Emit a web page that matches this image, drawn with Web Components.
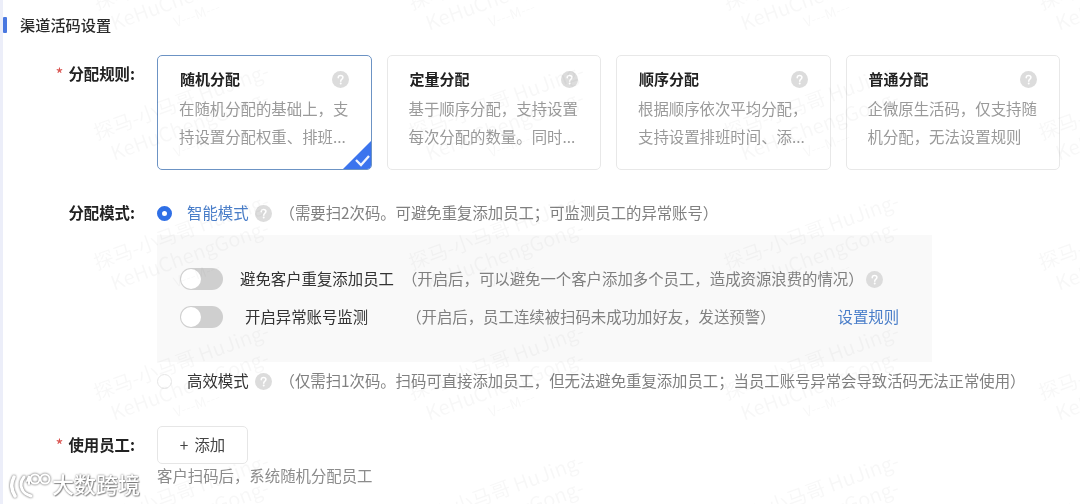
<!DOCTYPE html>
<html lang="zh"><head><meta charset="utf-8"><title>渠道活码设置</title>
<style>
html,body{margin:0;background:#fff;height:504px;overflow:hidden}
body{font-family:"Noto Sans CJK SC","Noto Sans",sans-serif;font-size:15.4px;color:#333}
</style></head><body>
<app-page>
  <section-title>渠道活码设置</section-title>
  <form-row required label="分配规则">
    <card-grid>
      <rule-card selected title="随机分配">在随机分配的基础上，支持设置分配权重、排班...</rule-card>
      <rule-card title="定量分配">基于顺序分配，支持设置每次分配的数量。同时...</rule-card>
      <rule-card title="顺序分配">根据顺序依次平均分配，支持设置排班时间、添...</rule-card>
      <rule-card title="普通分配">企微原生活码，仅支持随机分配，无法设置规则</rule-card>
    </card-grid>
  </form-row>
  <form-row class="mode" label="分配模式">
    <mode-option selected name="智能模式">（需要扫2次码。可避免重复添加员工；可监测员工的异常账号）</mode-option>
    <option-panel>
      <toggle-row name="避免客户重复添加员工" note="（开启后，可以避免一个客户添加多个员工，造成资源浪费的情况）" help></toggle-row>
      <toggle-row indent name="开启异常账号监测" note="（开启后，员工连续被扫码未成功加好友，发送预警）" link="设置规则"></toggle-row>
    </option-panel>
    <mode-option class="second" name="高效模式">（仅需扫1次码。扫码可直接添加员工，但无法避免重复添加员工；当员工账号异常会导致活码无法正常使用）</mode-option>
  </form-row>
  <form-row class="staff" required label="使用员工">
    <add-button>添加</add-button>
    <hint-text>客户扫码后，系统随机分配员工</hint-text>
  </form-row>
  <water-mark></water-mark>
  <brand-logo>大数跨境</brand-logo>
</app-page>
<script>
function def(name, css, html){
  customElements.define(name, class extends HTMLElement{
    constructor(){super();const r=this.attachShadow({mode:'open'});
      const get=k=>this.getAttribute(k)||'';
      r.innerHTML='<style>'+css+'</style>'+(typeof html==='function'?html(get,this):html);
    }
  });
}
const helpSvg='<svg viewBox="0 0 17 17" width="17" height="17" aria-hidden="true" style="flex:none"><circle cx="8.5" cy="8.5" r="8.5" fill="#dcdcdc"/><path d="M6.2 6.8c0-1.400 1-2.200 2.400-2.200s2.300.8 2.300 2c0 1-.6 1.400-1.200 1.800-.6.4-.9.7-.9 1.400v.4" fill="none" stroke="#fff" stroke-width="1.500" stroke-linecap="round"/><circle cx="8.700" cy="12.600" r="1" fill="#fff"/></svg>';
def('help-icon',':host{display:inline-flex;width:17px;height:17px;flex:none}',helpSvg);

def('app-page',`:host{display:block;position:relative;width:1080px;height:504px;overflow:hidden;box-sizing:border-box;border-left:3px solid #eceef9;filter:blur(.4px)}`,'<slot></slot>');

def('section-title',`:host{display:flex;align-items:center;height:16px;padding-top:17px;margin-bottom:22px;font-size:15.2px;font-weight:500;color:#2b2b2b}
 i{width:4px;height:16px;background:#4a78e0;margin-right:13px;border-radius:1px}
 span{padding-bottom:3px}`,'<i></i><span><slot></slot></span>');

def('form-row',`:host{display:grid;grid-template-columns:132px 1fr;column-gap:22px;padding-right:20px}
 .l{display:flex;justify-content:flex-end;align-items:center;height:38px;font-weight:700;color:#222;white-space:nowrap}
 .l span{padding-bottom:3px}
 :host(.mode) .l{height:24px}
 :host(.mode){margin-top:31px}
 :host(.staff){margin-top:33px}
 b{color:#d9534f;font-weight:400;margin-right:5px;font-size:17px;line-height:1;padding-bottom:1px}
 .c{min-width:0}`,(get,el)=>`<div class="l">${el.hasAttribute('required')?'<b>*</b>':''}<span>${get('label')}:</span></div><div class="c"><slot></slot></div>`);

def('card-grid',`:host{display:grid;grid-template-columns:repeat(4,1fr);column-gap:15px}`,'<slot></slot>');

def('rule-card',`:host{display:block;position:relative;height:115px;box-sizing:border-box;padding:11px 21px 0 21px;border:1px solid #e8e8e8;border-radius:5px;background:#fff;overflow:hidden}
 :host([selected]){border-color:#6c93c4}
 .t{display:flex;justify-content:space-between;align-items:center;height:24px;font-weight:700;color:#222;margin-bottom:3px;font-size:15px}
 .t span{padding-bottom:2px;margin-left:1px}
 .t svg{margin-right:1px}
 .d{line-height:28px;color:#9a9a9a;white-space:normal}
 svg.corner{position:absolute;right:-1px;bottom:-1px}`,(get,el)=>`<div class="t"><span>${get('title')}</span>${helpSvg}</div><div class="d"><slot></slot></div>${el.hasAttribute('selected')?'<svg class="corner" width="30" height="30" viewBox="0 0 30 30" aria-hidden="true"><path d="M30 0V30H0Z" fill="#3b74ee"/><path d="M14 20l5 5 8-9" fill="none" stroke="#fff" stroke-width="2.300" stroke-opacity=".92"/></svg>':''}`);

def('mode-option',`:host{display:flex;align-items:center;height:24px;white-space:nowrap;color:#333}
 :host(.second){margin-top:7px}
 .r{width:15px;height:15px;border-radius:50%;box-sizing:border-box;border:1px solid #e6e6e6;background:#fff;margin:0 15px 0 0;flex:none}
 :host([selected]) .r{border:5px solid #2f6fe6}
 :host([selected]) .n{color:#4a7ec9}
 .n{margin-right:6px;padding-bottom:3px}
 .s{margin-left:8px;color:#808080;padding-bottom:3px;letter-spacing:-.03px}`,(get)=>`<span class="r"></span><span class="n">${get('name')}</span>${helpSvg}<span class="s"><slot></slot></span>`);

def('option-panel',`:host{display:block;height:127px;box-sizing:border-box;margin-top:10px;margin-right:128px;padding:33px 0 0 23px;background:#f9f9f9}`,'<slot></slot>');

def('toggle-row',`:host{display:flex;align-items:center;height:22px;margin-bottom:16px;white-space:nowrap;color:#333}
 .sw{width:43px;height:22px;border-radius:11px;background:#cfcfcf;position:relative;flex:none;margin-right:17px}
 .sw i{position:absolute;left:1px;top:1px;width:20px;height:20px;border-radius:50%;background:#fff}
 :host([indent]) .n{margin-left:5px}
 .n,.note,a{padding-bottom:3px}
 .note{color:#808080;margin-left:8px;margin-right:2px}
 :host([indent]) .note{margin-left:38px}
 a{color:#4a7ec9;margin-left:60px;text-decoration:none}`,(get,el)=>`<span class="sw"><i></i></span><span class="n">${get('name')}</span><span class="note">${get('note')}</span>${el.hasAttribute('help')?'<help-icon></help-icon>':''}${get('link')?`<a>${get('link')}</a>`:''}`);

def('add-button',`:host{display:inline-flex;align-items:center;justify-content:center;width:91px;height:38px;box-sizing:border-box;border:1px solid #e6e6e6;border-radius:5px;color:#444;background:#fff}
 span{padding-bottom:3px}
 span.p{margin-right:6px}`,'<span class="p">+</span><span><slot></slot></span>');

def('hint-text',`:host{display:block;line-height:22px;padding-bottom:2px;color:#8c8c8c}`,'<slot></slot>');

def('water-mark',`:host{position:absolute;inset:0;pointer-events:none;overflow:hidden}
 div{position:absolute;width:200px;transform:rotate(-20deg);color:rgba(0,0,0,.032);font-size:20px;line-height:25px;text-align:center;white-space:nowrap;font-family:"Noto Sans CJK SC",sans-serif}
 small{font-size:14px;display:block;line-height:17px}`,()=>{
   let s='';
   const xs=[85,400,715,1030], ys=[-43,87,217,347,477];
   ys.forEach(y=>xs.forEach(x=>{s+=`<div style="left:${x}px;top:${y}px">探马-小马哥 HuJing-<br>KeHuChengGong-<small>V---M---</small></div>`;}));
   return s;
 });

def('brand-logo',`:host{position:absolute;left:7px;bottom:5px;display:flex;align-items:center;gap:1px;color:#fff;font-size:22px;font-weight:500;line-height:26px;text-shadow:0 0 2px rgba(0,0,0,.6),1px 1px 1px rgba(0,0,0,.35)}
 span{padding-bottom:3px}
 svg{filter:drop-shadow(0 0 1px rgba(0,0,0,.7))}`,`<svg width="41" height="26" viewBox="0 0 41 26" aria-hidden="true"><g fill="none" stroke="#fff" stroke-linecap="round"><path d="M4 5C1 11 1 18 5 24" stroke-width="3.500"/><path d="M14 5c-3 4-4 8-2 12 1 3 5 6 9 7" stroke-width="3"/><path d="M17 9l2-5v8" stroke-width="2"/><circle cx="25" cy="7" r="4.500" stroke-width="2"/><circle cx="35" cy="7" r="4.500" stroke-width="2"/></g></svg><span><slot></slot></span>`);
</script>
</body></html>
